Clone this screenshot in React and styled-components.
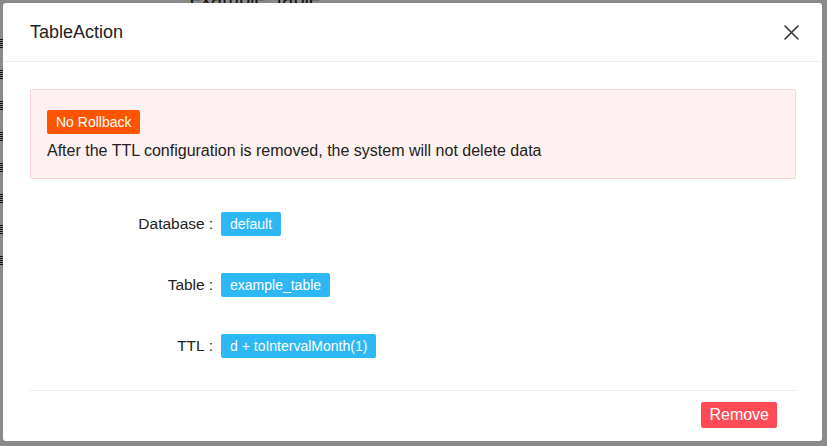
import React from "react";
import styled, { createGlobalStyle } from "styled-components";

const Global = createGlobalStyle`
  html, body { margin: 0; padding: 0; }
  body {
    width: 827px; height: 446px; overflow: hidden;
    font-family: "Liberation Sans", Arial, sans-serif;
    background: #ffffff;
  }
  #root { width: 827px; height: 446px; position: relative; }
`;

const Page = styled.div`
  width: 827px;
  height: 446px;
  position: relative;
  background: #ffffff;
  overflow: hidden;
`;

const BackTitle = styled.div`
  padding: 0 0 0 190px;
  margin-top: -12px;
  font-size: 20px;
  color: #222;
`;

const BackList = styled.div`
  display: flex;
  flex-direction: column;
  gap: 21px;
  margin-top: 28px;
`;

const BackMark = styled.div`
  width: 4px;
  height: 10px;
  background: repeating-linear-gradient(#222 0 1px, transparent 1px 2px);
`;

const Mask = styled.div`
  position: absolute;
  inset: 0;
  background: rgba(0, 0, 0, 0.46);
`;

const Modal = styled.div`
  position: absolute;
  top: 3px;
  left: 3px;
  width: 819px;
  height: 438px;
  background: #ffffff;
  border-radius: 3px;
  display: flex;
  flex-direction: column;
  box-sizing: border-box;
`;

const Header = styled.div`
  height: 59px;
  box-sizing: border-box;
  border-bottom: 1px solid #ececec;
  display: flex;
  align-items: center;
  justify-content: space-between;
  padding: 0 23px 0 27px;
`;

const Title = styled.div`
  font-size: 18px;
  font-weight: 500;
  color: #222;
  letter-spacing: 0;
`;

const CloseBtn = styled.button`
  border: 0;
  background: transparent;
  padding: 0;
  width: 16px;
  height: 16px;
  display: flex;
  align-items: center;
  justify-content: center;
  cursor: pointer;
  margin-top: 1px;
`;

const Body = styled.div`
  padding: 27px 26px 0 27px;
  display: flex;
  flex-direction: column;
  flex: 1;
`;

const Alert = styled.div`
  box-sizing: border-box;
  height: 90px;
  background: #fff1f1;
  border: 1px solid #fdd3d3;
  border-radius: 2px;
  padding: 20px 16px 0 16px;
  display: flex;
  flex-direction: column;
  align-items: flex-start;
  gap: 6px;
`;

const Tag = styled.span`
  display: inline-flex;
  align-items: center;
  height: 24px;
  padding: 0 ${(p) => p.$pad || 9}px;
  border-radius: 2px;
  background: ${(p) => p.$bg};
  color: #ffffff;
  font-size: 14px;
  box-sizing: border-box;
  white-space: nowrap;
`;

const AlertText = styled.div`
  font-size: 16px;
  color: #222;
  line-height: 22px;
`;

const Form = styled.div`
  display: flex;
  flex-direction: column;
  gap: 37px;
  margin-top: 33px;
`;

const Row = styled.div`
  display: flex;
  align-items: center;
  height: 24px;
`;

const Label = styled.div`
  width: 191px;
  text-align: right;
  font-size: 15.5px;
  color: #222;
  padding-right: 8px;
  box-sizing: border-box;
  white-space: nowrap;
`;

const Colon = styled.span`
  margin-left: 4px;
`;

const Divider = styled.div`
  height: 1px;
  background: #ececec;
  margin-top: 32px;
`;

const Footer = styled.div`
  display: flex;
  justify-content: flex-end;
  padding: 11px 19px 0 0;
`;

const DangerButton = styled.button`
  height: 26px;
  padding: 0 8px;
  border: 0;
  border-radius: 2px;
  background: #ff4b55;
  color: #ffffff;
  font-size: 16px;
  font-family: inherit;
  cursor: pointer;
`;

const rows = [
  { label: "Database", value: "default" },
  { label: "Table", value: "example_table" },
  { label: "TTL", value: "d + toIntervalMonth(1)" },
];

export default function App() {
  return (
    <Page>
      <Global />
      <BackTitle>example_table</BackTitle>
      <BackList>
        {Array.from({ length: 8 }).map((_, i) => (
          <BackMark key={i} />
        ))}
      </BackList>
      <Mask />
      <Modal>
        <Header>
          <Title>TableAction</Title>
          <CloseBtn aria-label="close">
            <svg width="15" height="15" viewBox="0 0 15 15">
              <path d="M1 1 L14 14 M14 1 L1 14" stroke="#333" strokeWidth="1.6" strokeLinecap="round" />
            </svg>
          </CloseBtn>
        </Header>
        <Body>
          <Alert>
            <Tag $bg="#ff5500">No Rollback</Tag>
            <AlertText>After the TTL configuration is removed, the system will not delete data</AlertText>
          </Alert>
          <Form>
            {rows.map((r) => (
              <Row key={r.label}>
                <Label>
                  {r.label}
                  <Colon>:</Colon>
                </Label>
                <Tag $bg="#2db7f5">{r.value}</Tag>
              </Row>
            ))}
          </Form>
          <Divider />
          <Footer>
            <DangerButton>Remove</DangerButton>
          </Footer>
        </Body>
      </Modal>
    </Page>
  );
}
